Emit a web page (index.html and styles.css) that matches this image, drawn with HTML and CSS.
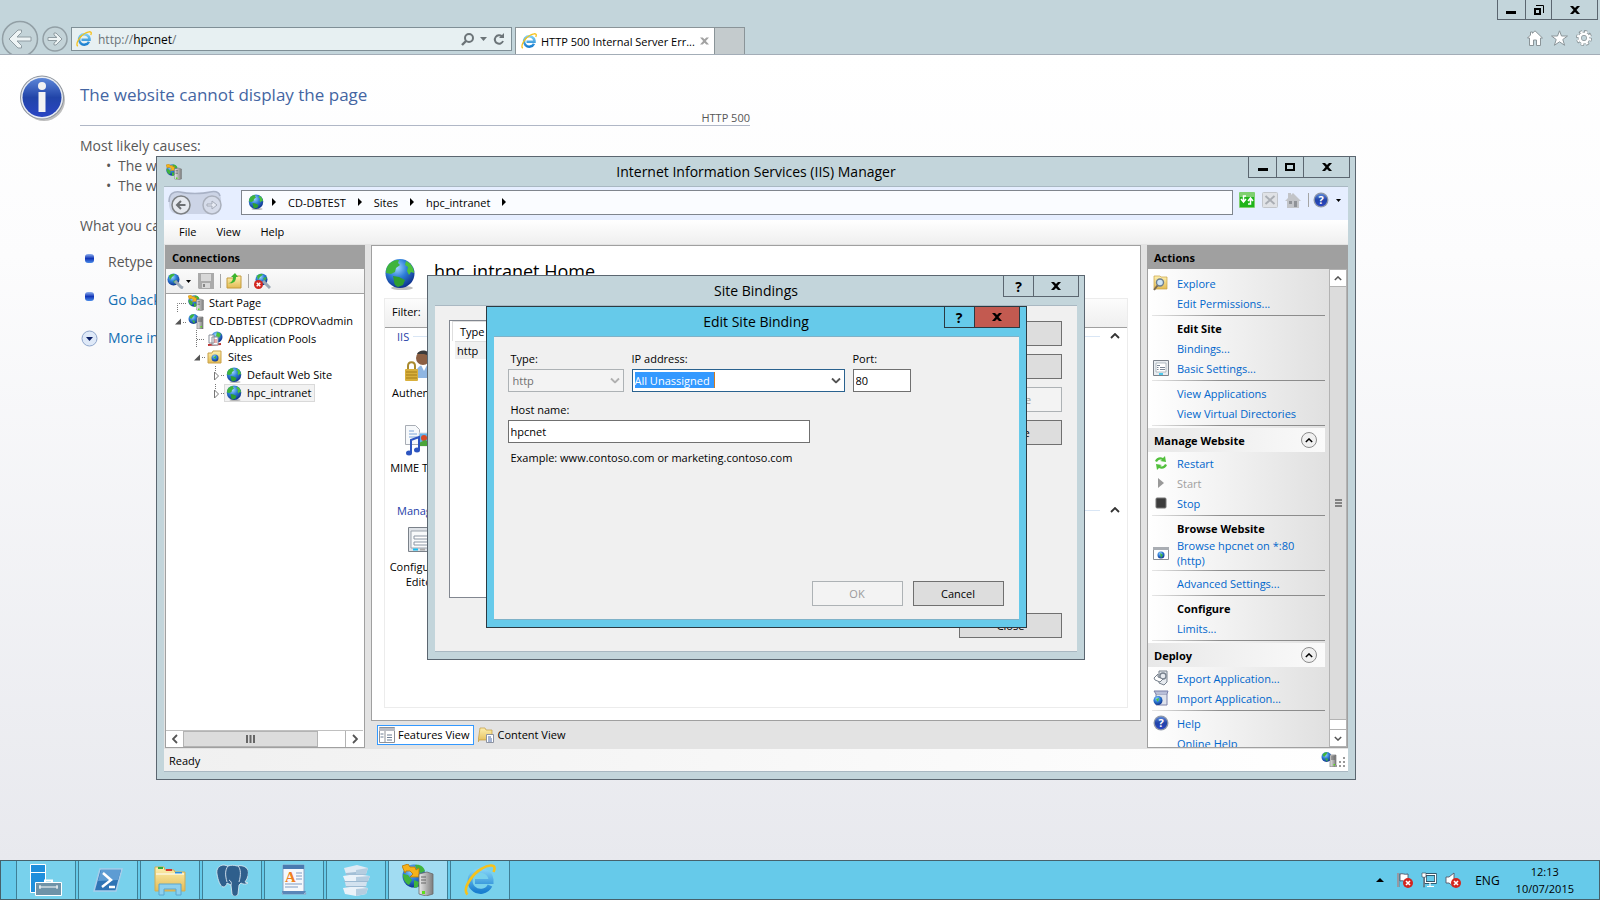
FILE: index.html
```html
<!DOCTYPE html>
<html lang="en">

<head>
  <meta charset="UTF-8">
  <meta name="viewport" content="width=device-width, initial-scale=1.0">
  <title>HTTP 500 Internal Server Error</title>
  <link rel="stylesheet" href="styles.css">
</head>

<body>
  <!-- shared icons -->
  <svg class="sprite" aria-hidden="true">
    <defs>
      <radialGradient id="sea" cx="0.4" cy="0.3" r="0.75">
        <stop offset="0" stop-color="#9fd6ff" />
        <stop offset="0.45" stop-color="#2f7fd8" />
        <stop offset="1" stop-color="#0b2a86" />
      </radialGradient>
      <linearGradient id="metal" x1="0" x2="1">
        <stop offset="0" stop-color="#e8e8e8" />
        <stop offset="1" stop-color="#7d7d7d" />
      </linearGradient>
      <linearGradient id="folder" x1="0" x2="0" y1="0" y2="1">
        <stop offset="0" stop-color="#fdf0b0" />
        <stop offset="1" stop-color="#e3bb54" />
      </linearGradient>
      <linearGradient id="info" x1="0" x2="0" y1="0" y2="1">
        <stop offset="0" stop-color="#5c86d8" />
        <stop offset="0.5" stop-color="#2144a8" />
        <stop offset="1" stop-color="#2a45c4" />
      </linearGradient>
      <linearGradient id="ieblue" x1="0" x2="0" y1="0" y2="1">
        <stop offset="0" stop-color="#7fd0f5" />
        <stop offset="1" stop-color="#1a7fd0" />
      </linearGradient>
    </defs>
    <symbol id="globe" viewBox="0 0 32 32">
      <ellipse cx="18" cy="30" rx="11" ry="2" fill="#000" opacity="0.25" />
      <circle cx="16" cy="15.500" r="14.500" fill="url(#sea)" />
      <path d="M5 6c3-3 7-4.500 10-4l-1 3 2 2-4 3-1 4-4 2-5-1c0-4 1-7 3-9z" fill="#3fb43c" />
      <path d="M22 3c5 2 8 7 8 12l-3-1-2 3-2-4 1-4-3-2z" fill="#4cc23c" />
      <path d="M9 18l6 1 6 3-2 5-5 2c-3-1-4-3-4-6z" fill="#2f9e30" />
    </symbol>
    <symbol id="server" viewBox="0 0 16 16">
      <circle cx="5.500" cy="6" r="5" fill="url(#sea)" />
      <path d="M1.500 4c1-2 3-3 5-2.500L5 4 3 6zM4 7l3 1-1 3z" fill="#3fb43c" />
      <path d="M9 4h6v12H9z" fill="url(#metal)" stroke="#6a6a6a" stroke-width="0.600" />
      <path d="M10 6h4M10 8h4" stroke="#555" stroke-width="0.900" />
      <path d="M12.500 13h1.500v1.500h-1.500z" fill="#5ce01c" />
    </symbol>
    <!-- server with the yellow connect arrow -->
    <symbol id="iis" viewBox="0 0 32 32">
      <circle cx="12" cy="12" r="11.500" fill="url(#sea)" />
      <path d="M13 1c5-1 9 2 10 6l-4 2-4-3zM1 10l5 1 4 5-3 5C3 19 1 15 1 10zM12 16l5 2-1 5-4 1z" fill="#3fb43c" />
      <path d="M0 2l6-2 2 3h5l1 3 3-2v9H8l3-3-3-3H4L3 9z" fill="#f6b21b" stroke="#b97800" stroke-width="0.800" />
      <path d="M17 10l8-2 6 2v20l-7 2-7-2z" fill="url(#metal)" stroke="#6a6a6a" stroke-width="0.800" />
      <path d="M19 13h5M19 16h5M19 19h5" stroke="#666" stroke-width="1.200" />
      <path d="M20 27h3v3h-3z" fill="#5ce01c" />
    </symbol>
    <symbol id="ie" viewBox="0 0 32 32">
      <path d="M26 21.500A10.500 10.500 0 1 1 27 15.500v2H11" fill="none" stroke="url(#ieblue)" stroke-width="5" />
      <path d="M3.500 30.500C-2 25 8 10 18 4.500c6-3.500 12-4 12.500-1 .3 1.500-.3 3-1 4.500" fill="none" stroke="#f6c21c" stroke-width="2.600" />
    </symbol>
    <symbol id="help" viewBox="0 0 16 16">
      <circle cx="8" cy="8" r="7.500" fill="#8f98a8" />
      <circle cx="8" cy="8" r="6.200" fill="url(#info)" />
      <text x="8" y="12" text-anchor="middle" font-size="11" font-weight="700" fill="#fff">?</text>
    </symbol>
    <symbol id="close" viewBox="0 0 10 8">
      <path d="M0 0h3l2 2 2-2h3L6.500 4 10 8H7L5 6 3 8H0l3.500-4z" />
    </symbol>
    <symbol id="chev-up" viewBox="0 0 10 6">
      <path d="M1 5l4-4 4 4" fill="none" stroke="currentColor" stroke-width="1.800" />
    </symbol>
    <symbol id="chev-down" viewBox="0 0 10 6">
      <path d="M1 1l4 4 4-4" fill="none" stroke="currentColor" stroke-width="1.800" />
    </symbol>
    <symbol id="form" viewBox="0 0 16 16">
      <path d="M.5.500h15v15H.5z" fill="#e9edf1" stroke="#7c838c" />
      <path d="M3 3h10v9H3z" fill="#fff" stroke="#9aa3ad" stroke-width="0.700" />
      <path d="M4 5.500h3M4 7.500h1.500M7 7.500h5M4 9.500h1.500M7 9.500h5" stroke="#6d7b8c" stroke-width="0.900" />
      <path d="M6 14h4" stroke="#25bfea" stroke-width="1.600" />
    </symbol>
    <symbol id="crumb" viewBox="0 0 4 8">
      <path d="M0 0l4 4-4 4z" />
    </symbol>
    <symbol id="redx" viewBox="0 0 10 10">
      <circle cx="5" cy="5" r="5" fill="#d3261f" />
      <path d="M3 3l4 4M7 3L3 7" stroke="#fff" stroke-width="1.600" />
    </symbol>
  </svg>

  <main class="desktop">
    <section class="browser">
      <header class="browser-bar">
        <div class="caption">
          <button aria-label="Minimize"><svg width="10" height="8"><path d="M0 5h10v3H0z" /></svg></button>
          <button aria-label="Restore"><svg width="10" height="10"><path d="M1 4h5v5H1z" fill="none" stroke="#000" stroke-width="2" /><path d="M2 .5h7.500V8" fill="none" stroke="#000" /></svg></button>
          <button class="wide" aria-label="Close"><svg width="10" height="8"><use href="#close" /></svg></button>
        </div>
        <div class="nav">
          <button class="nav-btn back" aria-label="Back">
            <svg width="38" height="38" viewBox="0 0 38 38">
              <circle cx="19" cy="19" r="17.500" fill="#c3d3d8" stroke="#929fa5" stroke-width="1.500" />
              <path d="M8 19l9-9 3.500 0v2.500L16 17h14v4H16l4.500 4.500V28H17z" fill="#eef4f5" stroke="#8f9ca2" />
            </svg>
          </button>
          <button class="nav-btn" aria-label="Forward">
            <svg width="26" height="26" viewBox="0 0 26 26">
              <circle cx="13" cy="13" r="12" fill="#c3d3d8" stroke="#929fa5" stroke-width="1.500" />
              <path d="M20 13l-6-6h-2v2l3 2.500H6v3h9L12 17v2h2z" fill="#eef4f5" stroke="#8f9ca2" />
            </svg>
          </button>
          <div class="address">
            <svg width="16" height="16"><use href="#ie" /></svg>
            <span class="url"><span class="dim">http://</span>hpcnet<span class="dim">/</span></span>
            <button aria-label="Search"><svg width="13" height="13" viewBox="0 0 13 13"><circle cx="8" cy="5" r="4" fill="none" stroke="#6c7478" stroke-width="2" /><path d="M5 8l-4 4" stroke="#6c7478" stroke-width="2.400" /></svg></button>
            <button aria-label="Search options"><svg width="7" height="4"><path d="M0 0h7L3.500 4z" fill="#6c7478" /></svg></button>
            <button aria-label="Refresh"><svg width="12" height="13" viewBox="0 0 12 13"><path d="M9 3.500A4.200 4.200 0 1 0 10 8" fill="none" stroke="#6c7478" stroke-width="2" /><path d="M6 5h5V0z" fill="#6c7478" /></svg></button>
          </div>
          <div class="tab">
            <svg width="16" height="16"><use href="#ie" /></svg>
            <span>HTTP 500 Internal Server Err...</span>
            <button aria-label="Close tab"><svg width="9" height="8" fill="#a3a3a3"><use href="#close" /></svg></button>
          </div>
          <button class="new-tab" aria-label="New tab"></button>
          <div class="tools">
            <button aria-label="Home"><svg width="16" height="16" viewBox="0 0 16 16"><path d="M8 .8L15.500 8H13.500v7.500H9.500V10h-3v5.500h-4V8H.5l3-3V2h2v1.200z" fill="#fff" stroke="#8a9498" /></svg></button>
            <button aria-label="Favorites"><svg width="17" height="16" viewBox="0 0 17 16"><path d="M8.500.8l2 5.200h6l-4.700 3.500 1.800 5.800-5.100-3.500-5.100 3.500 1.800-5.800L.5 6h6z" fill="#fff" stroke="#8a9498" /></svg></button>
            <button aria-label="Tools"><svg width="16" height="16" viewBox="0 0 16 16"><circle cx="8" cy="8" r="6.700" fill="none" stroke="#8a9498" stroke-width="2.600" stroke-dasharray="3.200 2.060" /><circle cx="8" cy="8" r="4.200" fill="none" stroke="#8a9498" stroke-width="4" /><circle cx="8" cy="8" r="6.200" fill="none" stroke="#fff" stroke-width="2" stroke-dasharray="2.200 2.670" stroke-dashoffset="-.4" /><circle cx="8" cy="8" r="4.200" fill="none" stroke="#fff" stroke-width="2.600" /></svg></button>
          </div>
        </div>
      </header>

      <article class="error-page">
        <svg class="info-icon" width="46" height="48" viewBox="0 0 46 48">
          <circle cx="24" cy="25" r="21" fill="#000" opacity="0.25" />
          <circle cx="22" cy="22.500" r="22" fill="#8e949c" />
          <circle cx="22" cy="22.500" r="21" fill="#e9edf4" />
          <circle cx="22" cy="22.500" r="19.500" fill="url(#info)" />
          <circle cx="22" cy="11" r="4" fill="#f3f3f3" />
          <path d="M18.500 17h7v20h-7z" fill="#f3f3f3" />
        </svg>
        <div class="error-body">
          <h1>The website cannot display the page</h1>
          <div class="code">HTTP 500</div>
          <p>Most likely causes:</p>
          <ul class="causes">
            <li>The website is under maintenance.</li>
            <li>The website has a programming error.</li>
          </ul>
          <p class="try">What you can try:</p>
          <ul class="steps">
            <li><i class="dot"></i>Retype the address.</li>
            <li><i class="dot"></i><a href="#">Go back to the previous page.</a></li>
            <li><svg width="17" height="17" viewBox="0 0 17 17"><circle cx="8.500" cy="8.500" r="7.500" fill="#dfe9f8" stroke="#8fa6cc" /><path d="M5 7h7l-3.500 4z" fill="#0b1f66" /></svg><a href="#">More information</a></li>
          </ul>
        </div>
      </article>
    </section>

    <section class="window iis">
      <header class="title-bar">
        <svg class="app-icon" width="16" height="16"><use href="#iis" /></svg>
        <h2>Internet Information Services (IIS) Manager</h2>
        <div class="caption">
          <button aria-label="Minimize"><svg width="10" height="8"><path d="M0 5h10v3H0z" /></svg></button>
          <button aria-label="Maximize"><svg width="10" height="8"><path d="M1 1h8v6H1z" fill="none" stroke="#000" stroke-width="2" /></svg></button>
          <button class="wide" aria-label="Close"><svg width="10" height="8"><use href="#close" /></svg></button>
        </div>
      </header>

      <div class="client">
        <div class="location">
          <svg width="54" height="28" viewBox="0 0 54 28">
            <path d="M1 14C0 4 5 1 12 2c8 2 22 2 30 0 8-1 12 2 11 10-1 8-4 12-10 12H10C4 24 1 20 1 14z" fill="#ccd4e6" />
            <path d="M1 12C1 4 5 1 12 2c8 2 22 2 30 0 5-1 9 0 10 4" fill="none" stroke="#a9b2c6" stroke-width="1.500" />
            <circle cx="13" cy="15" r="9" fill="#e6e9ef" stroke="#7d8083" stroke-width="1.500" />
            <path d="M17.500 15H9M13 11l-4 4 4 4" fill="none" stroke="#6d7073" stroke-width="2" />
            <circle cx="44" cy="15" r="9" fill="#d6dcea" stroke="#aab0bc" stroke-width="1.500" />
            <path d="M39 14h5v-3l5 4-5 4v-3h-5z" fill="#e6eaf3" stroke="#a5abb8" />
          </svg>
          <div class="path">
            <svg width="16" height="16"><use href="#globe" /></svg>
            <svg class="crumb" width="4" height="8"><use href="#crumb" /></svg>
            <span>CD-DBTEST</span>
            <svg class="crumb" width="4" height="8"><use href="#crumb" /></svg>
            <span>Sites</span>
            <svg class="crumb" width="4" height="8"><use href="#crumb" /></svg>
            <span>hpc_intranet</span>
            <svg class="crumb" width="4" height="8"><use href="#crumb" /></svg>
          </div>
          <div class="location-tools">
            <button aria-label="Refresh"><svg width="16" height="16" viewBox="0 0 16 16"><rect width="16" height="16" rx="1" fill="#7fd070" /><path d="M1 5h14v10H1z" fill="#1fb41a" /><path d="M7 4H4.500v5M2 7l2.500 3L7 7M9 12h2.500V7M9 9l2.500-3L14 9" fill="none" stroke="#fff" stroke-width="1.500" /></svg></button>
            <button aria-label="Stop" disabled><svg width="16" height="16" viewBox="0 0 16 16"><rect x=".5" y=".5" width="15" height="15" rx="1" fill="#e0e2e6" stroke="#c3c6cb" /><path d="M3.500 4l9 8M12.500 4l-9 8" stroke="#aaaeb4" stroke-width="2" /></svg></button>
            <button aria-label="Home" disabled><svg width="16" height="16" viewBox="0 0 16 16"><path d="M0 9l3-3V1h3v2l2-2 8 8h-2v7H2V9z" fill="#c2c4c8" /><path d="M4 9h3v3H4zM9 9h3v6H9z" fill="#8f9297" /></svg></button>
            <i class="divider"></i>
            <button aria-label="Help"><svg width="16" height="16"><use href="#help" /></svg></button>
            <button aria-label="Help menu"><svg width="5" height="3"><path d="M0 0h5L2.500 3z" /></svg></button>
          </div>
        </div>

        <nav class="menu">
          <a href="#">File</a>
          <a href="#">View</a>
          <a href="#">Help</a>
        </nav>

        <div class="panes">
          <aside class="pane connections">
            <h3>Connections</h3>
            <div class="tree-tools">
              <button aria-label="Connect"><svg width="25" height="16" viewBox="0 0 25 16"><circle cx="6.500" cy="6.500" r="6" fill="url(#sea)" /><path d="M2 3c2-2 4-2.500 6-1.500L5 4 3 7zM6 8l4-1-2 4z" fill="#3fb43c" /><path d="M8 8l6 6 2 1" stroke="#9aa7b5" stroke-width="3" fill="none" /><path d="M19 7h5l-2.500 3z" /></svg></button>
              <button aria-label="Save" disabled><svg width="16" height="16" viewBox="0 0 16 16"><path d="M0 0h16v16H1l-1-1z" fill="#aaa" /><path d="M3 1h10v7H3zM4 10h8v5H4z" fill="#d8d8d8" /><path d="M5 11h2v3H5z" fill="#888" /></svg></button>
              <i class="divider"></i>
              <button aria-label="Up"><svg width="16" height="16" viewBox="0 0 16 16"><path d="M1 5h7l1-2h6v12H1z" fill="url(#folder)" stroke="#c39a3c" /><path d="M2 10c3 0 5-2 5-6H5l4-4 3 4h-2c0 5-3 7-8 6z" fill="#3cb52e" /></svg></button>
              <i class="divider"></i>
              <button aria-label="Disconnect"><svg width="17" height="16" viewBox="0 0 17 16"><circle cx="7.500" cy="6.500" r="6" fill="url(#sea)" /><path d="M3 3c2-2 4-2.500 6-1.500L6 4 4 7zM9 5l4-1-2 4z" fill="#3fb43c" /><path d="M9 8l5 5 2 2" stroke="#9aa7b5" stroke-width="3" fill="none" /><use href="#redx" x="0" y="7" width="9" height="9" /></svg></button>
            </div>
            <ul class="tree">
              <li>
                <svg width="20" height="18"><path d="M11.500 18V9.500H20" class="twig" /></svg>
                <a class="node" href="#"><svg width="16" height="16"><use href="#iis" /></svg>Start Page</a>
              </li>
              <li>
                <svg width="20" height="18"><path d="M9 12.500h6v-6z" fill="#555" /><path d="M17 10.500h3" class="twig" /></svg>
                <a class="node" href="#"><svg width="16" height="16"><use href="#server" /></svg>CD-DBTEST (CDPROV\admin</a>
              </li>
              <li>
                <svg width="39" height="18"><path d="M30.500 0v18M31 9.500h8" class="twig" /></svg>
                <a class="node" href="#"><svg width="16" height="16" viewBox="0 0 16 16"><circle cx="10" cy="6" r="5.500" fill="url(#sea)" /><path d="M10 1l4 2-2 4-3-2z" fill="#4cc23c" /><path d="M1 14l13-1" stroke="#b33" stroke-width="2" /><path d="M2 4h5v8H2zM5 6h6v8H5z" fill="#fff" stroke="#8a8f99" /><path d="M7 9h3M7 11h3" stroke="#d06060" /></svg>Application Pools</a>
              </li>
              <li>
                <svg width="39" height="18"><path d="M28 12.500h6v-6z" fill="#555" /><path d="M36 9.500h3" class="twig" /></svg>
                <a class="node" href="#"><svg width="16" height="16" viewBox="0 0 16 16"><path d="M1 4h4l1-2h8v12H1z" fill="url(#folder)" stroke="#caa24a" /><circle cx="8" cy="9" r="3.500" fill="url(#sea)" /><path d="M6 8l3-1v3z" fill="#3fb43c" /></svg>Sites</a>
              </li>
              <li>
                <svg width="58" height="18"><path d="M49.500 0v5M55 9.500h3" class="twig" /><path d="M48.500 6v8l4-4z" fill="#fff" stroke="#777" /></svg>
                <a class="node" href="#"><svg width="16" height="16"><use href="#globe" /></svg>Default Web Site</a>
              </li>
              <li>
                <svg width="58" height="18"><path d="M49.500 0v5M55 9.500h3" class="twig" /><path d="M48.500 6v8l4-4z" fill="#fff" stroke="#777" /></svg>
                <a class="node selected" href="#"><svg width="16" height="16"><use href="#globe" /></svg>hpc_intranet</a>
              </li>
            </ul>
            <div class="hscroll">
              <button aria-label="Scroll left"><svg width="6" height="10"><path d="M5 1L1 5l4 4" fill="none" stroke="#555" stroke-width="1.800" /></svg></button>
              <div class="thumb"><svg width="9" height="8"><path d="M1 0v8M4.500 0v8M8 0v8" stroke="#666" stroke-width="2" /></svg></div>
              <div class="rest"></div>
              <button aria-label="Scroll right"><svg width="6" height="10"><path d="M1 1l4 4-4 4" fill="none" stroke="#555" stroke-width="1.800" /></svg></button>
            </div>
          </aside>

          <div class="center">
            <div class="workspace">
              <div class="home-title">
                <svg width="32" height="32"><use href="#globe" /></svg>
                <h1>hpc_intranet Home</h1>
              </div>
              <div class="feature-box">
                <div class="filter">Filter:</div>
                <div class="group">
                  <h4>IIS<i></i><svg width="10" height="6"><use href="#chev-up" /></svg></h4>
                  <div class="feature">
                    <svg width="32" height="32" viewBox="0 0 32 32"><circle cx="18" cy="8" r="7" fill="#8c5f42" /><path d="M12 4c2-5 12-5 13 2l-6-2z" fill="#3a3a3a" /><path d="M10 28c0-9 4-13 9-13s11 4 11 13z" fill="#8fb6e2" /><path d="M16 15l3 6 3-6z" fill="#fff" /><path d="M3 19v-3c0-5 7-5 7 0v3" fill="none" stroke="#a98a2e" stroke-width="2" /><rect x="0" y="19" width="13" height="12" rx="1" fill="#d9b03c" /><path d="M1 22h11M1 25h11M1 28h11" stroke="#a47d18" /></svg>
                    <a href="#">Authentic...</a>
                  </div>
                  <div class="feature">
                    <svg width="32" height="32" viewBox="0 0 32 32"><path d="M.5.500h10l4 4v15H.5z" fill="#f7f9fb" stroke="#a8adb5" /><path d="M4 6h5M4 9h8M4 12h8" stroke="#7fa6d8" /><path d="M14 8h17v13H14z" fill="#62b0ea" stroke="#d7dde4" /><circle cx="19" cy="13" r="3" fill="#d84a26" /><path d="M14 18l6-3 11 5v1H14z" fill="#4ba43a" /><path d="M6 28V15l8-3v13" fill="none" stroke="#2d55c0" stroke-width="2" /><ellipse cx="4" cy="28" rx="3" ry="2.500" fill="#2d55c0" /><ellipse cx="12" cy="25" rx="3" ry="2.500" fill="#2d55c0" /></svg>
                    <a href="#">MIME Types</a>
                  </div>
                </div>
                <div class="group">
                  <h4>Management<i></i><svg width="10" height="6"><use href="#chev-up" /></svg></h4>
                  <div class="feature">
                    <svg width="32" height="32" viewBox="0 0 32 32"><path d="M3.500 3.500h25v24h-25z" fill="#dfe3e8" stroke="#7a8189" /><path d="M6 7h20v17H6z" fill="#f8fafb" stroke="#9aa3ad" /><path d="M9 12h14v3H9zM9 18h14v3H9z" fill="#fff" stroke="#8b96a3" /><path d="M8 25.500h5" stroke="#19bdf0" stroke-width="2" /><path d="M15 25.500h5" stroke="#aaa" stroke-width="2" /></svg>
                    <a href="#">Configurat... Editor</a>
                  </div>
                </div>
              </div>
            </div>
            <div class="view-tabs">
              <button class="active"><svg width="16" height="16" viewBox="0 0 16 16"><path d="M.5.500h15v15H.5z" fill="#fff" stroke="#8d9198" /><path d="M0 1h16v3H0z" fill="#b9bcc4" /><path d="M6 4v12" stroke="#8d9198" /><path d="M1.500 7h3M1.500 10h3M8 8h5M8 10.500h5M8 13h5" stroke="#6e7f95" /></svg>Features View</button>
              <button><svg width="16" height="16" viewBox="0 0 16 16"><path d="M0 15L2 1h5l1 2h6v10H1z" fill="url(#folder)" stroke="#c19a3e" stroke-width="0.700" /><path d="M8.500 7.500h7v8h-7z" fill="#fff" stroke="#8d93a0" /><path d="M10 10h3M10 12h4M10 14h4" stroke="#4a6aa8" /></svg>Content View</button>
            </div>
          </div>

          <aside class="pane actions">
            <h3>Actions</h3>
            <div class="scroller">
              <div class="action-list">
                <a href="#"><svg width="16" height="16" viewBox="0 0 16 16"><path d="M1 1h6l1 1h6v12H1z" fill="url(#folder)" stroke="#c9a144" stroke-width="0.700" /><circle cx="7" cy="7.500" r="3.500" fill="#cfe6f7" stroke="#6c7f93" stroke-width="1.400" /><path d="M4.500 10.500L1 15" stroke="#7a6a50" stroke-width="2" /></svg>Explore</a>
                <a href="#">Edit Permissions...</a>
                <hr>
                <h5>Edit Site</h5>
                <a href="#">Bindings...</a>
                <a href="#"><svg width="16" height="16"><use href="#form" /></svg>Basic Settings...</a>
                <hr>
                <a href="#">View Applications</a>
                <a href="#">View Virtual Directories</a>
                <hr>
                <h4>Manage Website<button aria-label="Collapse"><svg width="8" height="5" viewBox="0 0 10 6"><use href="#chev-up" /></svg></button></h4>
                <a href="#"><svg width="16" height="16" viewBox="0 0 16 16"><path d="M2 6c1-3 5-5 8-3l2-2 1 6-6-1 2-1C7 4 5 5 4 7zM14 10c-1 3-5 5-8 3l-2 2-1-6 6 1-2 1c2 1 4 0 5-2z" fill="#52c03c" /></svg>Restart</a>
                <a class="off"><svg width="16" height="16" viewBox="0 0 16 16"><path d="M5 3l6 5-6 5z" fill="#999" /></svg>Start</a>
                <a href="#"><svg width="16" height="16" viewBox="0 0 16 16"><rect x="3" y="3" width="10" height="10" rx="1" fill="#3c3c3c" stroke="#777" /></svg>Stop</a>
                <hr>
                <h5>Browse Website</h5>
                <a class="two" href="#"><svg width="16" height="16" viewBox="0 0 16 16"><path d="M.5 2.500h15v12H.5z" fill="#fff" stroke="#8a8f96" /><path d="M0 2h16v3H0z" fill="#a9adb3" /><circle cx="8" cy="10" r="3.500" fill="url(#sea)" /><path d="M7 8l3 2-2 3z" fill="#3fb43c" /></svg>Browse hpcnet on *:80 (http)</a>
                <hr>
                <a href="#">Advanced Settings...</a>
                <hr>
                <h5>Configure</h5>
                <a href="#">Limits...</a>
                <hr>
                <h4>Deploy<button aria-label="Collapse"><svg width="8" height="5" viewBox="0 0 10 6"><use href="#chev-up" /></svg></button></h4>
                <a href="#"><svg width="16" height="16" viewBox="0 0 16 16"><path d="M6 1h8v11l-3 3-5-2z" fill="#e6eaef" stroke="#76808c" /><circle cx="10" cy="6" r="3" fill="none" stroke="#76808c" stroke-width="1.300" /><path d="M1 8l4-4v3l5 2-3 3-5-2z" fill="#fff" stroke="#76808c" /></svg>Export Application...</a>
                <a href="#"><svg width="16" height="16" viewBox="0 0 16 16"><path d="M3 4h11v11H3z" fill="#dfe3ec" stroke="#7a80a8" /><path d="M3 4L1 1h14l-1 3" fill="#b9bfd8" stroke="#7a80a8" /><circle cx="5" cy="10.500" r="4.500" fill="url(#sea)" /><path d="M3 9l3-1-1 4z" fill="#4cc23c" /></svg>Import Application...</a>
                <hr>
                <a href="#"><svg width="16" height="16"><use href="#help" /></svg>Help</a>
                <a href="#">Online Help</a>
              </div>
              <div class="vscroll">
                <button aria-label="Scroll up"><svg width="8" height="5" viewBox="0 0 10 6"><use href="#chev-up" /></svg></button>
                <div class="thumb"><svg width="7" height="8"><path d="M0 1h7M0 4h7M0 7h7" stroke="#666" stroke-width="1.600" /></svg></div>
                <div class="rest"></div>
                <button aria-label="Scroll down"><svg width="8" height="5" viewBox="0 0 10 6"><use href="#chev-down" /></svg></button>
              </div>
            </div>
          </aside>
        </div>

        <footer class="status">
          <span>Ready</span>
          <svg width="25" height="18" viewBox="0 0 25 18"><use href="#server" width="16" height="16" /><path d="M22 6h2v2h-2zM18 10h2v2h-2zM22 10h2v2h-2zM14 14h2v2h-2zM18 14h2v2h-2zM22 14h2v2h-2z" fill="#999" /></svg>
        </footer>
      </div>

      <!-- Site Bindings dialog -->
      <section class="window dialog bindings">
        <header class="title-bar">
          <h2>Site Bindings</h2>
          <div class="caption">
            <button class="ask" aria-label="Help">?</button>
            <button class="wide" aria-label="Close"><svg width="10" height="8"><use href="#close" /></svg></button>
          </div>
        </header>
        <div class="dialog-body">
          <div class="binding-list">
            <table>
              <thead>
                <tr><th>Type</th></tr>
              </thead>
              <tbody>
                <tr><td>http</td></tr>
              </tbody>
            </table>
          </div>
          <div class="side">
            <button class="btn">Add...</button>
            <button class="btn">Edit...</button>
            <button class="btn" disabled>Remove</button>
            <button class="btn">Browse</button>
            <button class="btn last">Close</button>
          </div>
        </div>
      </section>

      <!-- Edit Site Binding dialog -->
      <section class="window dialog edit">
        <header class="title-bar">
          <h2>Edit Site Binding</h2>
          <div class="caption">
            <button class="ask" aria-label="Help">?</button>
            <button class="wide danger" aria-label="Close"><svg width="10" height="8"><use href="#close" /></svg></button>
          </div>
        </header>
        <form class="dialog-body">
          <div class="fields">
            <div class="field type">
              <label for="type">Type:</label>
              <select id="type" disabled>
                <option>http</option>
              </select>
              <svg width="10" height="7" viewBox="0 0 10 6"><use href="#chev-down" /></svg>
            </div>
            <div class="field ip">
              <label for="ip">IP address:</label>
              <select id="ip">
                <option>All Unassigned</option>
              </select>
              <svg width="10" height="7" viewBox="0 0 10 6"><use href="#chev-down" /></svg>
            </div>
            <div class="field port">
              <label for="port">Port:</label>
              <input id="port" type="text" value="80">
            </div>
          </div>
          <div class="field host">
            <label for="host">Host name:</label>
            <input id="host" type="text" value="hpcnet">
          </div>
          <p class="hint">Example: www.contoso.com or marketing.contoso.com</p>
          <div class="buttons">
            <button class="btn" type="button" disabled>OK</button>
            <button class="btn" type="button">Cancel</button>
          </div>
        </form>
      </section>
    </section>
  </main>

  <footer class="taskbar">
    <div class="apps">
      <button aria-label="Server Manager"><svg width="32" height="32" viewBox="0 0 32 32"><path d="M.5.500h15v28H.5z" fill="#1f8fdc" stroke="#fff" /><path d="M0 8.500h16" stroke="#fff" /><path d="M15 19v-2.500h7V19" fill="none" stroke="#fff" stroke-width="2" /><path d="M5.500 18.500h26v13h-26z" fill="#6f93a8" stroke="#fff" /><path d="M9 23h19M10 21v4M27 21v4" stroke="#fff" /></svg></button>
      <button aria-label="PowerShell"><svg width="32" height="32" viewBox="0 0 32 32"><path d="M8 5h22l-6 22H2z" fill="#2f74b5" stroke="#a8cdea" stroke-width="1.500" /><path d="M9 6h20l-3 10L6 17z" fill="#5d9cd3" /><path d="M11 9l8 7-9 7M17 23h6" fill="none" stroke="#fff" stroke-width="2.500" /></svg></button>
      <button aria-label="File Explorer"><svg width="32" height="32" viewBox="0 0 32 32"><path d="M1 3h9l1 3h9l1 2h10v19H1z" fill="url(#folder)" stroke="#d0ad55" /><path d="M4 4h5" stroke="#2fae3a" stroke-width="2" /><path d="M12 6h6" stroke="#d8352a" stroke-width="2" /><path d="M21 9h7" stroke="#2a8fe0" stroke-width="2" /><path d="M2 10h28" stroke="#fff" /><path d="M5 31V20h22v11h-5v-6H10v6z" fill="#8ed0ee" stroke="#5aa6cf" /></svg></button>
      <button aria-label="pgAdmin"><svg width="32" height="32" viewBox="0 0 32 32"><path d="M8 1C3 1 0 5 1 10c1 6 3 12 6 13 2 0 4-2 4-4l4 2 1 9c1 3 5 3 6 0l1-9 2-2c2 1 4 2 7 0l-3-1c3-4 4-9 3-12-2-4-7-5-11-4-3-1-6-1-9 0z" fill="#2f5f8c" stroke="#e4edf4" stroke-width="0.800" /><path d="M12 2c-3 4-3 9-1 16M22 2c3 3 3 9 1 16M15 21c1-2 0-4-2-5" fill="none" stroke="#dce8f2" stroke-width="0.900" /></svg></button>
      <button aria-label="WordPad"><svg width="32" height="32" viewBox="0 0 32 32"><path d="M5 1h21v26l2 3H4l1-3z" fill="#f5f8fc" stroke="#8aa4c4" /><path d="M5 1h21v4H5z" fill="#4a7ab0" /><text x="7" y="18" font-size="15" font-weight="700" fill="#f08020" class="serif">A</text><path d="M18 9h6M18 12h6M18 15h6M7 20h17M7 23h13" stroke="#7f9bc2" /><path d="M4 27h24l-2 3H5z" fill="#5a86b8" /></svg></button>
      <button aria-label="Servers"><svg width="32" height="32" viewBox="0 0 32 32"><path d="M4 4l13-3 11 3-2 6H6z" fill="#dfeaf4" /><path d="M3 12l13-2 14 2-2 5H5z" fill="#eaf2f9" /><path d="M6 9l10-1 10 1v2H6z" fill="#a3bfd6" /><path d="M5 18l12-1 10 1-1 5H6z" fill="#d3e2ef" /><path d="M3 24l14-2 11 2-2 6-10 2-11-2z" fill="#eaf2f9" /><path d="M4 17h24v1H4zM6 22h20v1H6z" fill="#9dbad2" /><path d="M16 6l12-2-2 6H16zM16 13l14-1-2 5H16zM16 25l12-1-2 6-10 2z" fill="#b5cde0" /></svg></button>
      <button class="current" aria-label="IIS Manager"><svg width="32" height="32"><use href="#iis" /></svg></button>
      <button aria-label="Internet Explorer"><svg width="32" height="32"><use href="#ie" /></svg></button>
    </div>
    <div class="tray">
      <svg class="more" width="8" height="4"><path d="M0 4h8L4 0z" /></svg>
      <svg width="16" height="16" viewBox="0 0 16 16"><path d="M1 1v14" stroke="#334" stroke-width="2.500" /><path d="M1 1v14" stroke="#fff" /><path d="M3 2c3-1 4 1 8 0v7c-4 1-5-1-8 0z" fill="#fff" stroke="#445" stroke-width="0.800" /><use href="#redx" x="6" y="6" width="10" height="10" /></svg>
      <svg width="16" height="16" viewBox="0 0 16 16"><path d="M4.500 2.500h10v8h-10z" fill="#67cbea" stroke="#234" stroke-width="2.400" /><path d="M4.500 2.500h10v8h-10zM9 11v3M6 14.500h7" fill="none" stroke="#fff" stroke-width="1.200" /><path d="M1 1h4v4H3.500v10h-1V5H1z" fill="#fff" stroke="#345" stroke-width="0.600" /></svg>
      <svg width="16" height="16" viewBox="0 0 16 16"><path d="M1 5h3l5-4v14l-5-4H1z" fill="#fff" stroke="#556" stroke-width="0.900" /><use href="#redx" x="6" y="6" width="10" height="10" /></svg>
      <span class="lang">ENG</span>
      <div class="clock"><span>12:13</span><span>10/07/2015</span></div>
    </div>
  </footer>
</body>

</html>
```
FILE: styles.css
```css
* {
  margin: 0;
  padding: 0;
  box-sizing: border-box;
}

body {
  height: 100vh;
  display: flex;
  flex-direction: column;
  overflow: hidden;
  font-family: 'Open Sans', 'Noto Sans', sans-serif;
  font-size: 11px;
  line-height: 15px;
  color: #000;
}

button,
input,
select {
  font: inherit;
  color: inherit;
}

button {
  border: none;
  background: none;
  display: flex;
  align-items: center;
  justify-content: center;
}

a {
  color: inherit;
  text-decoration: none;
}

ul {
  list-style: none;
}

svg {
  flex: none;
}

.sprite {
  position: absolute;
  width: 0;
  height: 0;
}

.desktop {
  flex: 1;
  position: relative;
  min-height: 0;
}

/* browser */
.browser {
  height: 100%;
  display: flex;
  flex-direction: column;
}

.browser-bar {
  background: #c3d5db;
  border-bottom: 1px solid #a3adb7;
  height: 55px;
}

.caption {
  display: flex;
  height: 21px;
  border: 1px solid #5b6670;
  border-top: none;
}

.caption button {
  width: 27px;
}

.caption button + button {
  border-left: 1px solid #5b6670;
}

.caption .wide {
  width: 46px;
}

.browser-bar .caption {
  width: 101px;
  height: 20px;
  margin: 0 2px 0 auto;
}

.nav {
  display: flex;
  align-items: flex-end;
  height: 34px;
  overflow: hidden;
}

.nav-btn {
  align-self: flex-start;
  height: 38px;
  margin-left: 3px;
}

.nav-btn.back {
  margin-left: 1px;
}

.address {
  flex: 0 1 441px;
  display: flex;
  align-items: center;
  gap: 6px;
  height: 24px;
  margin: 0 3px 3px;
  padding: 0 6px 0 4px;
  background: #e7f0f2;
  border: 1px solid #7f8f96;
  font-size: 12px;
}

.url {
  flex: 1;
}

.dim {
  color: #6b7377;
}

.tab {
  display: flex;
  align-items: center;
  gap: 4px;
  width: 200px;
  height: 27px;
  padding: 0 5px;
  background: #fff;
  border: 1px solid #8a9498;
  border-bottom: none;
  white-space: nowrap;
}

.tab span {
  flex: 1;
}

.new-tab {
  width: 30px;
  height: 27px;
  background: #c4cbcd;
  border: 1px solid #8a9498;
  border-width: 1px 1px 0 0;
}

.tools {
  display: flex;
  gap: 8px;
  margin: 0 8px 8px auto;
}

.error-page {
  flex: 1;
  display: flex;
  gap: 14px;
  padding: 20px;
  background: linear-gradient(#fff, #fcfcfd 25%, #e8e9ee);
  color: #575757;
  font-size: 14px;
  line-height: 20px;
}

.error-body {
  flex: 0 1 670px;
}

.error-body h1 {
  font-size: 17px;
  line-height: 22px;
  font-weight: 400;
  color: #4465a2;
  padding: 9px 0 4px;
}

.code {
  border-bottom: 1px solid #b0b7c6;
  text-align: right;
  font-size: 11px;
  line-height: 14px;
  margin-bottom: 10px;
  padding-top: 1px;
}

.causes li {
  padding-left: 38px;
}

.causes li::before {
  content: '•';
  display: inline-block;
  width: 12px;
  margin-left: -12px;
}

.try {
  padding: 20px 0 7px;
}

.steps li {
  display: flex;
  align-items: center;
  height: 38px;
  gap: 9px;
}

.steps svg {
  margin: 0 1px;
}

.steps a {
  color: #136fb4;
}

.dot {
  width: 9px;
  height: 9px;
  margin: 0 5px 8px;
  border-radius: 3px;
  background: linear-gradient(#8fb0ee, #1236b8 50%, #4a8be8);
}

/* window frame */
.window {
  position: absolute;
  display: flex;
  flex-direction: column;
  background: #c3d5db;
  border: 1px solid #5b6670;
  padding: 0 7px 7px;
}

.title-bar {
  display: flex;
  align-items: center;
  height: 29px;
  position: relative;
}

.title-bar h2 {
  flex: 1;
  text-align: center;
  font-size: 14px;
  line-height: 20px;
  font-weight: 400;
}

.title-bar .caption {
  position: absolute;
  top: 0;
  right: -2px;
}

.title-bar .app-icon {
  position: absolute;
  left: 2px;
}

.iis {
  inset: 156px 244px 80px 156px;
}

.client {
  flex: 1;
  display: flex;
  flex-direction: column;
  min-height: 0;
  border-top: 1px solid #a9b8c2;
  border-bottom: 1px solid #a9b8c2;
  background: #e3e3e3;
}

.location {
  display: flex;
  align-items: flex-start;
  height: 33px;
  padding: 3px 7px 0 4px;
  background: #e6eeff;
}

.path {
  flex: 1;
  display: flex;
  align-items: center;
  gap: 12px;
  height: 25px;
  margin: 0 6px 0 19px;
  padding: 0 6px 1px;
  background: #fafcff;
  border: 1px solid #7f858d;
}

.path .crumb:nth-child(2) {
  margin-left: -4px;
}

.location-tools {
  display: flex;
  align-items: center;
  gap: 7px;
  height: 20px;
}

.divider {
  width: 1px;
  height: 14px;
  margin-right: -3px;
  background: #a5a5a5;
}

.menu {
  display: flex;
  gap: 20px;
  height: 24px;
  padding: 0 15px;
  line-height: 24px;
  background: linear-gradient(#fff, #efefef);
}

.panes {
  flex: 1;
  display: flex;
  min-height: 0;
  gap: 6px;
  padding: 1px 0 1px 1px;
}

.pane {
  display: flex;
  flex-direction: column;
  width: 200px;
  min-height: 0;
  border: 1px solid #a0a0a0;
  border-top: none;
  background: #fff;
}

.pane h3 {
  height: 24px;
  padding-left: 7px;
  margin: 0 -1px;
  font-size: 11px;
  line-height: 25px;
  background: #a0a0a0;
}

.tree-tools {
  display: flex;
  align-items: center;
  gap: 6px;
  height: 25px;
  padding-left: 1px;
  background: linear-gradient(#fafafa, #efefef);
  border-bottom: 1px solid #a0a0a0;
}

.tree-tools .divider {
  margin-right: -1px;
}

.tree {
  flex: 1;
  overflow: hidden;
}

.tree li {
  display: flex;
  height: 18px;
  white-space: nowrap;
}

.twig {
  fill: none;
  stroke: #777;
  stroke-dasharray: 1 1;
}

.node {
  display: flex;
  align-items: center;
  gap: 5px;
  padding: 0 3px 0 1px;
  border: 1px solid transparent;
  line-height: 14px;
}

.node.selected {
  background: #f2f2f2;
  border-color: #d9d9d9;
}

.hscroll,
.vscroll {
  display: flex;
  background: #fff;
}

.hscroll {
  height: 17px;
  margin-right: 1px;
  border-top: 1px solid #c0c0c0;
}

.hscroll button {
  width: 17px;
}

.hscroll .thumb {
  width: 135px;
}

.thumb {
  display: flex;
  align-items: center;
  justify-content: center;
  background: #dcdcdc;
  border: 1px solid #b3b3b3;
}

.hscroll .rest {
  flex: 1;
  border-right: 1px solid #b3b3b3;
}

.center {
  flex: 1;
  display: flex;
  flex-direction: column;
}

.workspace {
  flex: 1;
  display: flex;
  flex-direction: column;
  padding: 12px;
  background: #fff;
  border: 1px solid #a0a0a0;
}

.home-title {
  display: flex;
  gap: 18px;
  height: 40px;
}

.home-title h1 {
  font-size: 18px;
  line-height: 26px;
  font-weight: 400;
}

.feature-box {
  flex: 1;
  border: 1px solid #ececec;
}

.filter {
  height: 29px;
  padding-left: 7px;
  line-height: 26px;
  background: linear-gradient(#fcfcfc, #efefef);
  border-bottom: 1px solid #a0a0a0;
}

.group + .group {
  margin-top: 2px;
}

.group h4 {
  display: flex;
  align-items: center;
  gap: 4px;
  height: 16px;
  margin: 0 7px 6px 12px;
  font-size: 11px;
  font-weight: 400;
  color: #1e3ea8;
}

.group h4 i {
  flex: 1;
  height: 1px;
  margin-right: 6px;
  background: #d9e6f5;
}

.group h4 svg {
  color: #333;
}

.feature {
  width: 72px;
  height: 75px;
  text-align: center;
}

.feature svg,
.feature a {
  display: block;
  margin: 0 auto 3px;
}

.view-tabs {
  display: flex;
  align-items: center;
  gap: 2px;
  height: 27px;
  padding-left: 6px;
}

.view-tabs button {
  height: 20px;
  padding: 0 4px 0 1px;
  gap: 3px;
  border: 1px solid transparent;
}

.view-tabs .active {
  background: #fff;
  border-color: #3399ff;
}

.actions {
  width: 201px;
  background: #e0e0e0;
}

.scroller {
  flex: 1;
  display: flex;
  min-height: 0;
  overflow: hidden;
}

.action-list {
  flex: 1;
  padding: 5px 4px 0 0;
  background: linear-gradient(to right, #fff, #e0e0e0);
}

.action-list a,
.action-list h5 {
  display: flex;
  align-items: center;
  position: relative;
  height: 20px;
  padding: 0 0 2px 29px;
  font-size: 11px;
}

.action-list a {
  color: #0066cc;
}

.action-list a.off {
  color: #a0a0a0;
}

.action-list a.two {
  height: 30px;
  padding-right: 20px;
}

.action-list a svg {
  position: absolute;
  left: 5px;
}

.action-list hr {
  height: 1px;
  margin: 1px 0 3px 4px;
  border: none;
  background: linear-gradient(to right, #e6e6e6, #8c8c8c 40%);
}

.action-list h4 {
  display: flex;
  align-items: center;
  justify-content: space-between;
  height: 24px;
  margin: -1px 0 2px;
  padding: 0 8px 0 6px;
  font-size: 11px;
  background: linear-gradient(to right, #e8e8e8, #fafafa);
}

.action-list h4 button {
  width: 16px;
  height: 16px;
  border: 1px solid #8c8c8c;
  border-radius: 8px;
  background: #f0f0f0;
}

.vscroll {
  flex-direction: column;
  width: 18px;
  color: #555;
  border: 1px solid #b3b3b3;
}

.vscroll button {
  height: 16px;
}

.vscroll .thumb {
  flex: 1;
  border-width: 1px 0;
}

.vscroll .rest {
  height: 10px;
  border-bottom: 1px solid #b3b3b3;
}

.status {
  display: flex;
  align-items: center;
  justify-content: space-between;
  height: 22px;
  padding: 0 2px 0 5px;
  background: linear-gradient(to right, #f0f0f0, #fff);
}

/* dialogs */
.dialog {
  left: 0;
  right: 0;
  margin: 0 auto;
}

.dialog .caption button {
  width: 29px;
}

.dialog .caption .wide {
  width: 45px;
}

.caption .ask {
  font-size: 14px;
  font-weight: 700;
}

.dialog-body {
  flex: 1;
  background: #f0f0f0;
  border-top: 1px solid #a9b8c2;
  border-bottom: 1px solid #a9b8c2;
}

.btn {
  width: 91px;
  height: 25px;
  background: #dddddd;
  border: 1px solid #707070;
}

.btn:disabled {
  background: #f3f3f3;
  border-color: #adb2b5;
  color: #9a9a9a;
}

.bindings {
  top: 118px;
  width: 658px;
  height: 385px;
}

.bindings .dialog-body {
  display: flex;
  gap: 20px;
  padding: 14px 15px 13px 14px;
}

.binding-list {
  flex: 1;
  height: 278px;
  background: #fff;
  border: 1px solid #828790;
}

.binding-list table {
  width: 100%;
  border-collapse: collapse;
  text-align: left;
}

.binding-list th {
  font-weight: 400;
  height: 20px;
  padding-left: 7px;
  border: 1px solid #dedede;
}

.binding-list td {
  height: 17px;
  padding-left: 2px;
  border-left: 5px solid #fff;
  background: #f0f0f0;
  background-clip: padding-box;
}

.side {
  display: flex;
  flex-direction: column;
  gap: 8px;
  padding-top: 1px;
}

.side .btn {
  width: 103px;
}

.side .last {
  margin-top: auto;
}

.edit {
  top: 149px;
  width: 541px;
  height: 322px;
  background: #66caea;
  border-color: #2b3a42;
}

.edit .caption,
.edit .caption button + button {
  border-color: #2b3a42;
}

.edit .title-bar .caption {
  right: -1px;
}

.caption .danger {
  background: #c35a50;
}

.edit .dialog-body {
  display: flex;
  flex-direction: column;
  padding: 14px 15px 13px 14px;
  border-color: #7fb2c8;
}

.fields {
  display: flex;
  gap: 8px;
}

.field {
  position: relative;
  display: flex;
  flex-direction: column;
}

.field label {
  margin-bottom: 3px;
}

.type label,
.host label {
  padding-left: 3px;
}

.field select,
.field input {
  appearance: none;
  height: 23px;
  padding: 0 2px 1px;
  background: #fff;
  border: 1px solid #707070;
  outline: none;
  border-radius: 0;
}

.field svg {
  position: absolute;
  right: 4px;
  bottom: 8px;
  color: #555;
}

.type {
  width: 116px;
}

.field.type select {
  padding-left: 4px;
  background: #f3f3f3;
  border-color: #adb2b5;
  color: #707070;
  opacity: 1;
}

.type svg {
  color: #b0b0b0;
}

.ip {
  width: 213px;
}

/* selected text drawn as a highlight band plus the caret */
.ip select {
  color: #fff;
  border-color: #2a628f;
  background: linear-gradient(#3399ff, #3399ff) 2px 2px / 79px 16px no-repeat, linear-gradient(#d07a20, #d07a20) 81px 2px / 1px 16px no-repeat, #fff;
}

.ip option {
  color: #000;
}

.port {
  width: 58px;
}

.host {
  width: 302px;
  margin-top: 10px;
}

.hint {
  padding: 7px 3px;
}

.buttons {
  display: flex;
  justify-content: flex-end;
  gap: 10px;
  margin-top: auto;
}

/* taskbar */
.taskbar {
  display: flex;
  justify-content: space-between;
  height: 40px;
  background: #66caea;
  border: 1px solid #46616b;
}

.apps {
  display: flex;
  gap: 2px;
  padding-left: 15px;
}

.apps button {
  width: 60px;
  background: #78d1ec;
  border: 1px solid #3f7f96;
  border-width: 0 1px;
}

.apps .current {
  background: #a1dcf2;
}

.serif {
  font-family: 'Liberation Serif', serif;
}

.tray {
  display: flex;
  align-items: center;
  gap: 8px;
  padding-right: 25px;
}

.more {
  margin-right: 5px;
}

.lang {
  margin: 0 8px 0 6px;
  font-size: 12px;
}

.clock {
  display: flex;
  flex-direction: column;
  align-items: center;
  line-height: 17px;
}
```
